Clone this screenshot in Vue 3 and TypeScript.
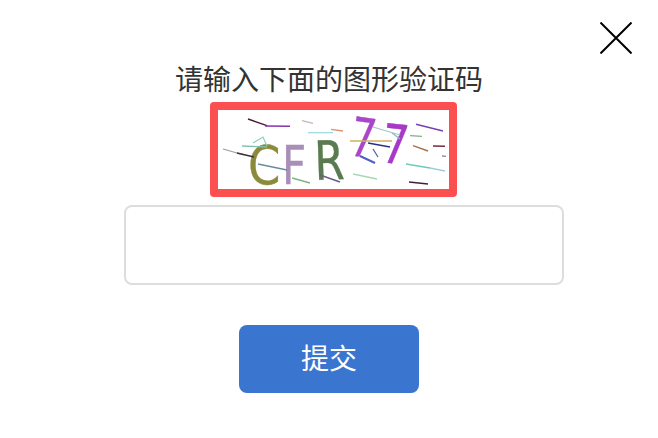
<script setup lang="ts">
interface Noise { d: string; c: string; w: number }
const noise: Noise[] = [
  { d: 'M30 9 L49 15.7', c: '#4a1a30', w: 1.4 },
  { d: 'M47 16 L72 16.3', c: '#8a2fb0', w: 1.4 },
  { d: 'M84 10.7 L95 13.3', c: '#c9b4b0', w: 1.3 },
  { d: 'M90 22.7 L115 22.7', c: '#9fdcdc', w: 1.3 },
  { d: 'M113 19.3 L125 21', c: '#e0906a', w: 1.3 },
  { d: 'M198 14.3 L225 21', c: '#7a3fb0', w: 1.4 },
  { d: 'M192 25.7 L204 26.3', c: '#7fb08a', w: 1.3 },
  { d: 'M195 35.7 L210 41', c: '#a8704a', w: 1.4 },
  { d: 'M215 36 L227 36.3', c: '#7a2a3a', w: 1.4 },
  { d: 'M224 46 L228 46.4', c: '#8a8a9a', w: 1.3 },
  { d: 'M188 54 L212 58', c: '#6fcaba', w: 1.3 },
  { d: 'M212 58 L227 61', c: '#9ad0d8', w: 1.3 },
  { d: 'M191 72 L210 74', c: '#40203a', w: 1.4 },
  { d: 'M135 64 L159 69', c: '#a8d8b0', w: 1.3 },
  { d: 'M102 65 L122 72', c: '#6a5a8a', w: 1.5 },
  { d: 'M74 68 L92 73', c: '#78b880', w: 1.3 },
  { d: 'M5 39 L26 45', c: '#a09a9a', w: 1.3 },
  { d: 'M19 43 L36 47', c: '#3a3040', w: 1.5 },
  { d: 'M24 36 L49 37', c: '#7fc0b0', w: 1.3 },
  { d: 'M35 33 L45 27 L49 36', c: '#8fd0b0', w: 1.2 },
  { d: 'M40 54 L69 60', c: '#6a8aa0', w: 1.3 },
  { d: 'M132 31 L174 31', c: '#d0b060', w: 1.3 },
  { d: 'M150 33 L172 37', c: '#28308a', w: 1.5 },
  { d: 'M142 46 L157 53', c: '#5060c0', w: 2 },
  { d: 'M155 39 L160 47', c: '#5060a0', w: 1.3 },
  { d: 'M155 17 L182 25', c: '#a0c8c0', w: 1.3 },
  { d: 'M174 23 L182 29', c: '#90b8c8', w: 1.3 },
]
</script>

<template>
  <main class="dialog">
    <svg class="close" viewBox="0 0 32 32" aria-label="关闭">
      <path d="M0.5 0.5 L31.5 31.5 M31.5 0.5 L0.5 31.5" />
    </svg>
    <h1 class="title">请输入下面的图形验证码</h1>
    <div class="captcha">
      <svg class="captcha-art" viewBox="0 0 231 79" width="231" height="79">
        <text class="glyph" transform="translate(30 74) scale(0.86 1)" fill="#8a8a3a" stroke="#8a8a3a" font-size="54">C</text>
        <text class="glyph" transform="translate(64 74) scale(0.78 1)" fill="#a98fb8" stroke="#a98fb8" font-size="54">F</text>
        <text class="glyph" transform="translate(97 70) rotate(-2) scale(0.8 1)" fill="#5a7a50" stroke="#5a7a50" font-size="54">R</text>
        <text class="glyph" transform="translate(130 45) rotate(8) scale(0.74 1)" fill="#a848c8" stroke="#a848c8" font-size="54">7</text>
        <text class="glyph" transform="translate(162 52) rotate(6) scale(0.78 1)" fill="#a838c8" stroke="#a838c8" font-size="54">7</text>
        <path v-for="(n, i) in noise" :key="i" :d="n.d" :stroke="n.c" :stroke-width="n.w" fill="none" />
      </svg>
    </div>
    <input class="code" type="text" />
    <button class="submit" type="button">提交</button>
  </main>
</template>

<style scoped>
.dialog {
  position: relative;
  box-sizing: border-box;
  width: 658px;
  height: 438px;
  padding-top: 58px;
  display: flex;
  flex-direction: column;
  align-items: center;
  background: #fff;
  font-family: "Noto Sans CJK SC", "Noto Sans", sans-serif;
}
.close {
  position: absolute;
  left: 600px;
  top: 22px;
  width: 32px;
  height: 32px;
}
.close path {
  stroke: #000;
  stroke-width: 2;
  fill: none;
}
.title {
  margin: 0;
  height: 40px;
  line-height: 40px;
  font-size: 28px;
  font-weight: 400;
  color: #333;
}
.captcha {
  box-sizing: border-box;
  width: 247px;
  height: 95px;
  margin-top: 4px;
  margin-left: 9px;
  border: 8px solid #fc5050;
  border-radius: 4px;
  background: #fff;
}
.captcha-art {
  display: block;
  overflow: visible;
  filter: blur(0.35px);
}
.glyph {
  font-family: "DejaVu Sans", sans-serif;
  stroke-width: 0.4px;
}
.code {
  box-sizing: border-box;
  width: 440px;
  height: 80px;
  margin: 8px 0 0 30px;
  padding: 0 12px;
  border: 2px solid #ddd;
  border-radius: 8px;
  background: #fff;
  outline: none;
}
.submit {
  width: 180px;
  height: 68px;
  margin-top: 40px;
  padding: 0 0 4px;
  border: 0;
  border-radius: 8px;
  background: #3a75cf;
  color: #fff;
  font-family: inherit;
  font-size: 28px;
}
</style>
